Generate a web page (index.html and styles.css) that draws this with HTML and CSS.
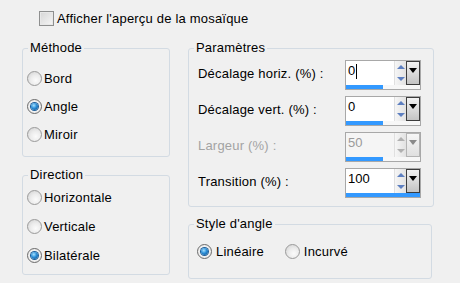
FILE: index.html
```html
<!DOCTYPE html>
<html lang="fr">
<head>
    <meta charset="UTF-8">
    <title>Mosaïque</title>
    <link rel="stylesheet" href="styles.css">
</head>
<body>
    <div class="dialog">
        <label class="preview"><span class="checkbox"></span>Afficher l'aperçu de la mosaïque</label>

        <div class="columns">
            <div class="col-left">
                <fieldset class="group group-method">
                    <legend>Méthode</legend>
                    <div class="option"><span class="radio"></span>Bord</div>
                    <div class="option"><span class="radio checked"></span>Angle</div>
                    <div class="option"><span class="radio"></span>Miroir</div>
                </fieldset>

                <fieldset class="group group-direction">
                    <legend>Direction</legend>
                    <div class="option"><span class="radio"></span>Horizontale</div>
                    <div class="option"><span class="radio"></span>Verticale</div>
                    <div class="option"><span class="radio checked"></span>Bilatérale</div>
                </fieldset>
            </div>

            <div class="col-right">
                <fieldset class="group group-params">
                    <legend>Paramètres</legend>

                    <div class="param">
                        <span class="param-label">Décalage horiz. (%) :</span>
                        <div class="spin">
                            <div class="spin-top">
                                <div class="spin-input">0<span class="caret"></span></div>
                                <div class="spin-arrows"><span class="arrow-up"></span><span class="arrow-down"></span></div>
                                <div class="spin-drop"><span class="drop-tri"></span></div>
                            </div>
                            <div class="spin-bar"><div class="spin-fill" style="width: 50%"></div></div>
                        </div>
                    </div>

                    <div class="param">
                        <span class="param-label">Décalage vert. (%) :</span>
                        <div class="spin">
                            <div class="spin-top">
                                <div class="spin-input">0</div>
                                <div class="spin-arrows"><span class="arrow-up"></span><span class="arrow-down"></span></div>
                                <div class="spin-drop"><span class="drop-tri"></span></div>
                            </div>
                            <div class="spin-bar"><div class="spin-fill" style="width: 50%"></div></div>
                        </div>
                    </div>

                    <div class="param disabled">
                        <span class="param-label">Largeur (%) :</span>
                        <div class="spin">
                            <div class="spin-top">
                                <div class="spin-input">50</div>
                                <div class="spin-arrows"><span class="arrow-up"></span><span class="arrow-down"></span></div>
                                <div class="spin-drop"><span class="drop-tri"></span></div>
                            </div>
                            <div class="spin-bar"><div class="spin-fill" style="width: 50%"></div></div>
                        </div>
                    </div>

                    <div class="param">
                        <span class="param-label">Transition (%) :</span>
                        <div class="spin">
                            <div class="spin-top">
                                <div class="spin-input">100</div>
                                <div class="spin-arrows"><span class="arrow-up"></span><span class="arrow-down"></span></div>
                                <div class="spin-drop"><span class="drop-tri"></span></div>
                            </div>
                            <div class="spin-bar"><div class="spin-fill" style="width: 100%"></div></div>
                        </div>
                    </div>
                </fieldset>

                <fieldset class="group group-style">
                    <legend>Style d'angle</legend>
                    <div class="inline-options">
                        <div class="option"><span class="radio checked"></span>Linéaire</div>
                        <div class="option"><span class="radio"></span>Incurvé</div>
                    </div>
                </fieldset>
            </div>
        </div>
    </div>
</body>
</html>
```

FILE: styles.css
```css
* {
    margin: 0;
    padding: 0;
    box-sizing: border-box;
}

body {
    width: 460px;
    height: 283px;
    background-color: #f0f0f0;
    font-family: "Liberation Sans", Arial, sans-serif;
    font-size: 13px;
    letter-spacing: 0.2px;
    color: #000;
    overflow: hidden;
}

/* Top checkbox */
.preview {
    display: flex;
    align-items: center;
    height: 15px;
    margin: 11px 0 0 39px;
}

.checkbox {
    width: 15px;
    height: 15px;
    margin-right: 3px;
    border: 1px solid #8e8f8f;
    background: linear-gradient(135deg, #d6d6d6, #f6f6f6);
    box-shadow: inset 0 0 0 1px #e8e8e8;
}

.columns {
    display: flex;
    margin-top: 15px;
}

.col-left {
    width: 148px;
    margin-left: 22px;
}

.col-right {
    width: 246px;
    margin-left: 18px;
}

/* Group boxes */
.group {
    border: 1px solid #d3dbe3;
    border-radius: 3px;
    min-width: 0;
}

.group legend {
    padding: 0 2px;
    line-height: 14px;
}

.group-method {
    padding: 9px 0 8px 4px;
}

.group-method legend,
.group-direction legend {
    margin-left: 1px;
}

.group-direction {
    margin-top: 11px;
    padding: 1px 0 4px 4px;
}

.group-params {
    padding: 5px 12px 8px 9px;
}

.group-params legend {
    margin-left: -4px;
}

.group-style {
    width: 244px;
    margin-top: 10px;
    padding: 6px 0 13px 8px;
}

.group-style legend {
    margin-left: -3px;
}

/* Radio options */
.option {
    display: flex;
    align-items: center;
    height: 28px;
}

.group-direction .option {
    height: 29px;
}

.radio {
    width: 15px;
    height: 15px;
    margin-right: 2px;
    border: 1px solid #9a9a9a;
    border-radius: 50%;
    background: radial-gradient(circle at 60% 65%, #fbfbfb 0%, #ececec 45%, #cfcfcf 100%);
    position: relative;
}

.radio.checked {
    border-color: #6b6b6b;
    background: radial-gradient(circle at 50% 50%, #ffffff 0%, #e4e4e4 100%);
}

.radio.checked::after {
    content: "";
    position: absolute;
    left: 3px;
    top: 3px;
    width: 7px;
    height: 7px;
    border-radius: 50%;
    background: radial-gradient(circle at 40% 35%, #a8e2ff 0%, #2a8ed8 45%, #0b4a86 100%);
    box-shadow: 0 0 0 1px #1d5e99;
}

.inline-options {
    display: flex;
}

.inline-options .option + .option {
    margin-left: 21px;
}

.inline-options .radio {
    margin-right: 4px;
}

/* Parameter rows */
.param {
    display: flex;
    align-items: flex-start;
    height: 30px;
}

.param + .param {
    margin-top: 6px;
}

.param-label {
    flex: 1;
    line-height: 24px;
    padding-top: 2px;
}

.param.disabled .param-label {
    color: #a3a3a3;
}

.spin {
    width: 76px;
    height: 30px;
    border: 1px solid #a8a8a8;
    display: flex;
    flex-direction: column;
    letter-spacing: 0;
}

.spin-top {
    display: flex;
    height: 24px;
}

.spin-input {
    flex: 1;
    background-color: #fff;
    padding-left: 2px;
    line-height: 20px;
    display: flex;
    align-items: flex-start;
}

.caret {
    width: 1px;
    height: 15px;
    margin: 3px 0 0 1px;
    background-color: #000;
}

.spin-arrows {
    width: 12px;
    display: flex;
    flex-direction: column;
    align-items: center;
    justify-content: space-around;
    background: linear-gradient(to right, #f6f6f6, #e2e2e2);
    border-left: 1px solid #e0e0e0;
}

.arrow-up {
    border-left: 4px solid transparent;
    border-right: 4px solid transparent;
    border-bottom: 4px solid #5d7fc0;
}

.arrow-down {
    border-left: 4px solid transparent;
    border-right: 4px solid transparent;
    border-top: 4px solid #5d7fc0;
}

.spin-drop {
    width: 14px;
    border: 1px solid #3c3c3c;
    background: linear-gradient(to bottom, #f2f2f2, #c4c4c4);
    display: flex;
    justify-content: center;
    padding-top: 6px;
}

.drop-tri {
    width: 0;
    height: 0;
    border-left: 4px solid transparent;
    border-right: 4px solid transparent;
    border-top: 5px solid #000;
}

.spin-bar {
    height: 4px;
    background-color: #f7f7f7;
}

.spin-fill {
    height: 100%;
    background-color: #3399ff;
}

/* Disabled spin */
.param.disabled .spin-input {
    background-color: #f5f5f5;
    color: #9a9a9a;
}

.param.disabled .arrow-up {
    border-bottom-color: #b0b0b0;
}

.param.disabled .arrow-down {
    border-top-color: #b0b0b0;
}

.param.disabled .spin-drop {
    border-color: #b4b4b4;
    background: linear-gradient(to bottom, #f6f6f6, #e0e0e0);
}

.param.disabled .drop-tri {
    border-top-color: #8a8a8a;
}
```
